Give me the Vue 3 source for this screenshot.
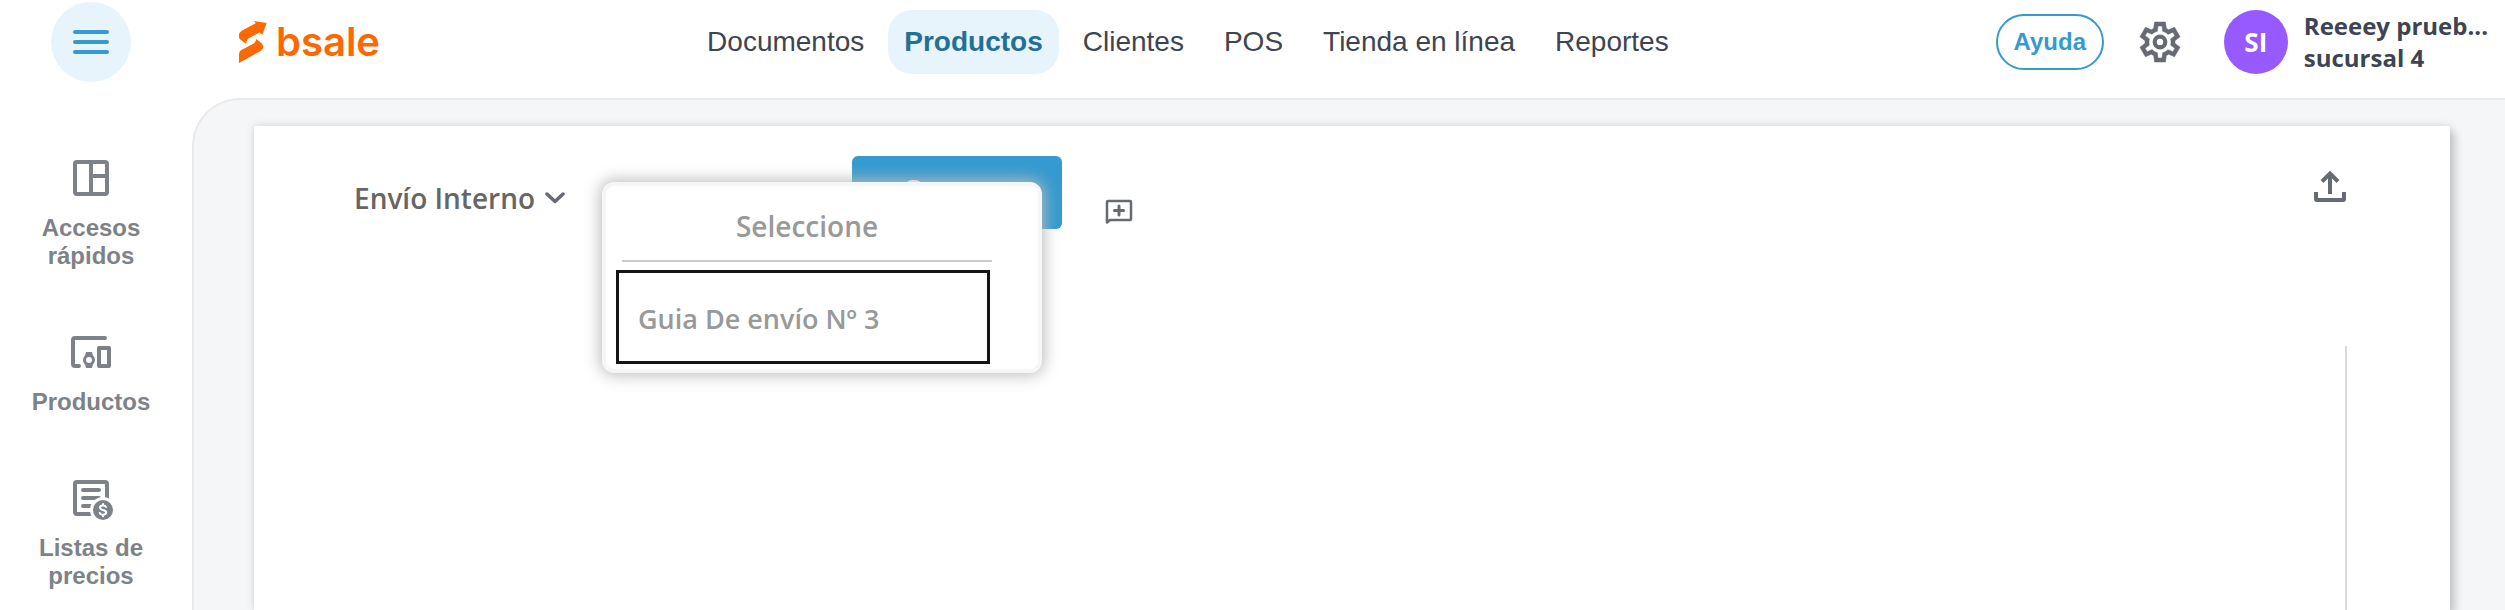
<script setup>
const navItems = [
  { label: 'Documentos', active: false },
  { label: 'Productos', active: true },
  { label: 'Clientes', active: false },
  { label: 'POS', active: false },
  { label: 'Tienda en línea', active: false },
  { label: 'Reportes', active: false },
]

const sideItems = [
  { label: 'Accesos rápidos', icon: 'dashboard' },
  { label: 'Productos', icon: 'devices' },
  { label: 'Listas de precios', icon: 'prices' },
]
</script>

<template>
  <div class="app">
    <div class="corner">
      <button class="menu-btn" type="button" aria-label="Menú">
        <svg width="48" height="48" viewBox="0 0 48 48" fill="none" stroke="currentColor" stroke-width="4" stroke-linecap="round">
          <path d="M8 14H40M8 24H40M8 34H40" />
        </svg>
      </button>
    </div>

    <header class="topbar">
      <a class="logo" href="#">
        <svg width="30" height="44" viewBox="714 60 90 132" fill="currentColor" aria-hidden="true">
          <path d="M762 63L800 69L787 104L779 97L746 115Q738 120 738 131L719 117Q712 101 724 93L767 70Z" />
          <path d="M769 117L785 130Q795 142 783 152L717 189V162Q717 154 724 150L760 131Q768 126 769 117Z" />
        </svg>
        <span class="logo-text">bsale</span>
      </a>

      <nav class="nav">
        <a v-for="item in navItems" :key="item.label" href="#" class="nav-link" :class="{ active: item.active }">{{ item.label }}</a>
      </nav>

      <div class="account">
        <button class="help" type="button">Ayuda</button>
        <button class="icon-btn" type="button" aria-label="Configuración">
          <svg width="48" height="48" viewBox="0 -960 960 960" fill="currentColor" stroke="none">
            <path d="M370-80l-16-128q-13-5-24.500-12T307-235l-119 50L78-375l103-78q-1-7-1-13.500v-27q0-6.500 1-13.500L78-585l110-190 119 50q11-8 23-15t24-12l16-128h220l16 128q13 5 24.500 12t22.500 15l119-50 110 190-103 78q1 7 1 13.500v27q0 6.500-2 13.500l103 78-110 190-118-50q-11 8-23 15t-24 12L590-80H370Zm70-80h79l14-106q31-8 57.500-23.500T639-327l99 41 39-68-86-65q5-14 7-29.500t2-31.500q0-16-2-31.500t-7-29.500l86-65-39-68-99 42q-22-23-48.500-38.500T533-694l-13-106h-79l-14 106q-31 8-57.500 23.500T321-633l-99-41-39 68 86 64q-5 15-7 30t-2 32q0 16 2 31t7 30l-86 65 39 68 99-42q22 23 48.500 38.500T427-266l13 106Z" stroke="currentColor" stroke-width="10" stroke-linejoin="round" />
            <circle cx="480" cy="-480" r="106" fill="none" stroke="currentColor" stroke-width="84" />
          </svg>
        </button>
        <button class="user" type="button">
          <span class="avatar">SI</span>
          <span class="user-text">
            <span>Reeeey prueb...</span>
            <span>sucursal 4</span>
          </span>
        </button>
      </div>
    </header>

    <aside class="sidebar">
      <a v-for="item in sideItems" :key="item.label" href="#" class="side-link">
        <svg v-if="item.icon === 'dashboard'" width="48" height="48" viewBox="0 0 48 48" fill="none" stroke="currentColor" stroke-width="4" stroke-linejoin="round">
          <rect x="8" y="8" width="32" height="32" rx="2" />
          <path d="M24 8V40M24 22H40" />
        </svg>
        <svg v-else-if="item.icon === 'devices'" width="48" height="48" viewBox="0 0 48 48" fill="none" stroke="currentColor" stroke-width="4" stroke-linecap="round" stroke-linejoin="round">
          <path d="M38 10H8Q6 10 6 12V36Q6 38 8 38H12" />
          <rect x="32" y="20" width="10" height="18" />
          <circle cx="22" cy="32" r="4.500" stroke-width="3" />
          <path d="M19 24H25L26 28H18ZM18 36H26L25 40H19Z" fill="currentColor" stroke="none" />
        </svg>
        <svg v-else width="48" height="48" viewBox="0 0 48 48" fill="none" stroke="currentColor" stroke-width="4" stroke-linecap="round" stroke-linejoin="round">
          <rect x="8" y="8" width="32" height="32" rx="2" />
          <path d="M16 16H32M16 24H32M16 32H24" />
          <circle cx="36" cy="36" r="13" fill="#fff" stroke="none" />
          <circle cx="36" cy="36" r="10" fill="currentColor" stroke="none" />
          <path d="M39 33Q38.500 31.500 36 31.500Q33 31.500 33 33.500Q33 35.300 36 36Q39.200 36.700 39.200 38.600Q39.200 40.700 36 40.700Q33.200 40.700 32.800 39M36 30V31.500M36 40.700V42.200" stroke="#fff" stroke-width="2" />
        </svg>
        <span>{{ item.label }}</span>
      </a>
    </aside>

    <main class="main">
      <section class="card">
        <div class="toolbar">
          <div class="picker">
            <button class="picker-btn" type="button" aria-haspopup="listbox" aria-expanded="true">
              Envío Interno
              <svg width="20" height="12" viewBox="0 0 20 12" fill="none" stroke="currentColor" stroke-width="3.500" stroke-linecap="round" stroke-linejoin="round">
                <path d="M2 2L10 9.500L18 2" />
              </svg>
            </button>
            <div class="popup">
              <div class="popup-title">Seleccione</div>
              <button class="option" type="button">Guia De envío Nº 3</button>
            </div>
          </div>
          <button class="primary" type="button">Generar</button>
          <button class="comment" type="button" aria-label="Agregar comentario">
            <svg width="28" height="26" viewBox="0 0 28 26" fill="none" stroke="currentColor" stroke-linejoin="round" stroke-linecap="round">
              <path d="M2 23.500V3Q2 2 3 2H25Q26 2 26 3V20Q26 21 25 21H5Z" stroke-width="2.500" />
              <path d="M9.500 11.500H18.500M14 7V16" stroke-width="3" />
            </svg>
          </button>
          <button class="upload" type="button" aria-label="Exportar">
            <svg width="34" height="48" viewBox="7 0 34 48" fill="none" stroke="currentColor" stroke-width="4">
              <path d="M24 32V11M16 19.500L24 11.500L32 19.500M10 30V37Q10 38 11 38H37Q38 38 38 37V30" />
            </svg>
          </button>
        </div>
        <div class="body"></div>
      </section>
    </main>
  </div>
</template>

<style>
body {
  margin: 0;
  background: #fff;
}
</style>

<style scoped>
.app {
  display: grid;
  grid-template-columns: 192px 1fr;
  grid-template-rows: 98px 1fr;
  min-height: 100vh;
  font-family: "Liberation Sans", Arial, sans-serif;
  color: #3e4450;
}
a {
  color: inherit;
  text-decoration: none;
}
button {
  margin: 0;
  padding: 0;
  border: 0;
  background: none;
  font: inherit;
  color: inherit;
  cursor: pointer;
}
svg {
  display: block;
  flex: none;
}
.corner {
  display: flex;
  justify-content: center;
  align-items: flex-start;
  padding: 2px 10px 0 0;
}
.menu-btn {
  display: grid;
  place-items: center;
  width: 80px;
  height: 80px;
  border-radius: 50%;
  background: #e7f4fb;
  color: #349acf;
}
.topbar {
  display: flex;
  align-items: center;
  justify-content: space-between;
  padding: 0 17px 14px 46px;
}
.logo {
  display: flex;
  align-items: center;
  gap: 8px;
  color: #fd6900;
}
.logo-text {
  font: 600 40px/44px Inter, sans-serif;
}
.nav {
  display: flex;
  gap: 8px;
}
.nav-link {
  padding: 0 16px;
  border-radius: 24px;
  font-size: 28px;
  line-height: 64px;
  white-space: nowrap;
}
.nav-link.active {
  background: #e7f4fb;
  color: #236f96;
  font-weight: 700;
}
.account {
  display: flex;
  align-items: center;
}
.help {
  width: 108px;
  height: 56px;
  border: 2px solid #349acf;
  border-radius: 28px;
  color: #349acf;
  font-size: 24px;
  font-weight: 700;
}
.icon-btn {
  margin: 0 40px 0 32px;
  color: #666a73;
}
.user {
  display: flex;
  align-items: center;
  gap: 16px;
  font-family: "Open Sans", sans-serif;
  font-weight: 700;
}
.avatar {
  width: 64px;
  height: 64px;
  border-radius: 50%;
  background: #975aff;
  color: #fff;
  font-size: 26px;
  line-height: 64px;
  text-align: center;
}
.user-text {
  display: flex;
  flex-direction: column;
  min-width: 184px;
  font-size: 24px;
  line-height: 32px;
  text-align: left;
  white-space: nowrap;
}
.sidebar {
  display: flex;
  flex-direction: column;
  gap: 58px;
  padding: 56px 10px 0 0;
}
.side-link {
  display: flex;
  flex-direction: column;
  align-items: center;
  gap: 12px;
  padding: 0 20px;
  color: #7d8289;
  font-size: 24px;
  font-weight: 700;
  line-height: 28px;
  text-align: center;
}
.main {
  display: flex;
  padding: 26px 55px 0 60px;
  border: solid #e9eaec;
  border-width: 2px 0 0 2px;
  border-top-left-radius: 48px;
  background: #f5f6f8;
  overflow: hidden;
}
.card {
  flex: 1;
  display: flex;
  flex-direction: column;
  padding: 30px 103px 0 100px;
  background: #fff;
  box-shadow: 6px 6px 8px rgba(0, 0, 0, 0.14), 0 0 8px rgba(0, 0, 0, 0.14);
  font-family: "Open Sans", sans-serif;
}
.toolbar {
  display: flex;
  align-items: flex-start;
  height: 190px;
}
.picker {
  position: relative;
  width: 498px;
  padding-top: 23px;
}
.picker-btn {
  display: flex;
  align-items: center;
  gap: 10px;
  color: #666;
  font-size: 28px;
  font-weight: 600;
  line-height: 38px;
}
.picker-btn svg {
  color: #666a73;
}
.popup {
  position: absolute;
  top: 26px;
  left: 248px;
  z-index: 2;
  box-sizing: border-box;
  width: 440px;
  padding: 0 48px 5px 10px;
  border: 4px solid #f5f6f8;
  border-radius: 12px;
  background: #fff;
  box-shadow: 0 0 16px 2px #bbb;
  color: #999;
  font-size: 28px;
  font-weight: 600;
}
.popup-title {
  width: 370px;
  margin: 0 0 8px 6px;
  padding: 21px 0 15px;
  border-bottom: 2px solid #ccc;
  line-height: 38px;
  text-align: center;
}
.option {
  display: block;
  box-sizing: border-box;
  width: 374px;
  height: 94px;
  padding: 2px 19px 0;
  border: 3px solid #151515;
  font-size: 27px;
  text-align: left;
}
.primary {
  width: 210px;
  height: 73px;
  padding-bottom: 6px;
  border-radius: 6px;
  background: #349acf;
  color: #fff;
  font-size: 28px;
  font-weight: 600;
}
.comment {
  margin: 43px 0 0 43px;
  color: #666a73;
}
.upload {
  margin: 6px 0 0 auto;
  color: #666a73;
}
.body {
  flex: 1;
  border-right: 2px solid #dadada;
}
</style>
